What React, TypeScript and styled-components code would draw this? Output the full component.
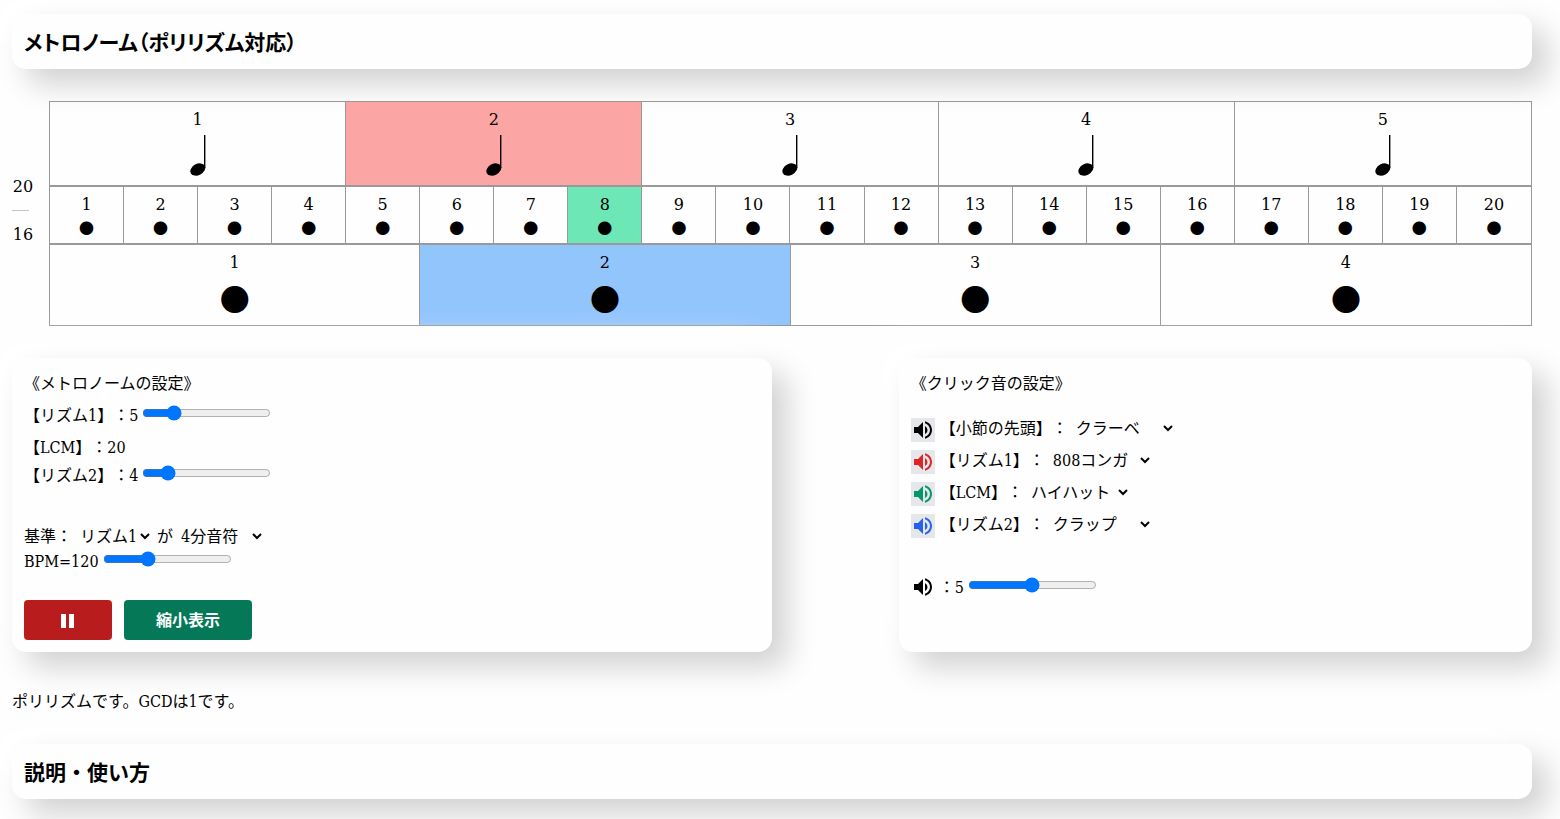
import React, { useState } from "react";
import styled, { createGlobalStyle } from "styled-components";
import { MdVolumeUp } from "react-icons/md";

const GlobalStyle = createGlobalStyle`
  *, *::before, *::after { box-sizing: border-box; }
  body {
    margin: 0;
    background: #fefefe;
    color: #000;
    font-family: "DejaVu Serif Condensed", "Noto Sans CJK JP", serif;
    font-size: 16px;
    font-weight: 400;
    line-height: 24px;
    text-spacing-trim: space-all;
  }
  button, input, select { font: inherit; color: inherit; }
`;

const Page = styled.main`
  padding: 14px 28px 20px 12px;
`;

const Card = styled.section`
  border-radius: 14px;
  background: #fefefe;
  box-shadow: 15px 15px 30px #d1d1d1, -15px -15px 30px #ffffff;
`;

const TitleCard = styled(Card)`
  padding: 13px 12px 14px;
`;

const Title = styled.h1<{ $tight?: boolean }>`
  margin: 0;
  font-family: "Noto Sans CJK JP", sans-serif;
  font-size: 21px;
  font-weight: 700;
  line-height: 28px;
  font-feature-settings: ${(p) => (p.$tight ? '"palt"' : "normal")};
`;

const Score = styled.section`
  display: flex;
  align-items: center;
  gap: 15px;
  margin: 32px 0;
`;

const Meter = styled.div`
  flex: none;
  width: 22px;
  padding-bottom: 6px;
  font-family: "DejaVu Serif", serif;
  text-align: center;
`;

const MeterLine = styled.hr`
  width: 17px;
  height: 1px;
  margin: 11px 0 12px;
  border: 0;
  background: #c4c4c4;
`;

const Tracks = styled.div`
  flex: 1;
  min-width: 0;
`;

const Track = styled.table`
  width: 100%;
  table-layout: fixed;
  border-collapse: separate;
  border-spacing: 0;
  border: 1px solid #999;
`;

const Beat = styled.td<{ $active?: string; $bottom: number }>`
  padding: 6px 0 ${(p) => p.$bottom}px;
  border-right: 1px solid #999;
  background: ${(p) => p.$active ?? "transparent"};
  text-align: center;
  &:last-child { border-right: 0; }
`;

const BeatNumber = styled.div`
  font-family: "DejaVu Serif", serif;
  line-height: 24px;
`;

const Dot = styled.div<{ $large?: boolean }>`
  font-family: "Noto Sans CJK JP", sans-serif;
  font-size: ${(p) => (p.$large ? 30 : 15)}px;
  line-height: ${(p) => (p.$large ? 46 : 22)}px;
`;

const NoteDrawing = styled.svg`
  display: block;
  margin: 3px auto 0;
`;

const Panels = styled.div`
  display: grid;
  grid-template-columns: 6fr 5fr;
  column-gap: calc(100% / 12);
`;

const Panel = styled(Card)`
  padding: 14px 12px 12px;
`;

const PanelTitle = styled.h2`
  margin: 0;
  font-size: 16px;
  font-weight: 400;
  line-height: 24px;
`;

const Row = styled.div<{ $top?: number }>`
  display: flex;
  align-items: center;
  height: 24px;
  margin-top: ${(p) => p.$top ?? 0}px;
  white-space: nowrap;
`;

const Slider = styled.input.attrs({ type: "range" })`
  width: 129px;
  height: 16px;
  margin: 0 0 6px 4px;
  accent-color: #0075ff;
`;

const Picker = styled.select<{ $width: number }>`
  width: ${(p) => p.$width}px;
  height: 24px;
  margin: 0 4px 2px;
  padding: 0;
  border: 0;
  background: transparent;
`;

const Buttons = styled.div`
  display: flex;
  gap: 12px;
  margin-top: 26px;
`;

const ActionButton = styled.button<{ $color: string; $width: number }>`
  display: flex;
  align-items: center;
  justify-content: center;
  width: ${(p) => p.$width}px;
  height: 40px;
  padding: 2px 0 0;
  border: 0;
  border-radius: 4px;
  background: ${(p) => p.$color};
  color: #fff;
  font-weight: 700;
`;

const SoundRow = styled.div<{ $top?: number }>`
  display: flex;
  align-items: flex-start;
  gap: 5px;
  margin-top: ${(p) => p.$top ?? 7}px;
`;

const IconButton = styled.button<{ $color: string }>`
  display: block;
  width: 24px;
  height: 24px;
  margin-top: 1px;
  padding: 0;
  border: 0;
  background: #e5e7eb;
  color: ${(p) => p.$color};
  svg { display: block; }
`;

const VolumeRow = styled(Row)`
  svg { flex: none; margin: 0 4px 2px 0; }
`;

const Message = styled.p`
  margin: 38px 0 30px;
`;

function QuarterNote() {
  return (
    <NoteDrawing width="16" height="42" viewBox="0 0 16 42" aria-hidden="true">
      <ellipse cx="7.8" cy="34.5" rx="7.9" ry="5.6" transform="rotate(-28 7.8 34.5)" />
      <path d="M14 0h1.4v33H14z" />
    </NoteDrawing>
  );
}

type TrackRowProps = {
  count: number;
  current: number;
  color: string;
  bottom: number;
  children: React.ReactNode;
};

function TrackRow({ count, current, color, bottom, children }: TrackRowProps) {
  return (
    <Track>
      <tbody>
        <tr>
          {Array.from({ length: count }, (_, i) => (
            <Beat key={i} $bottom={bottom} $active={i + 1 === current ? color : undefined}>
              <BeatNumber>{i + 1}</BeatNumber>
              {children}
            </Beat>
          ))}
        </tr>
      </tbody>
    </Track>
  );
}

const sounds = ["クラーベ", "808コンガ", "ハイハット", "クラップ"];

const clicks = [
  { id: "head", label: "【小節の先頭】：", color: "#000000", sound: "クラーベ" },
  { id: "rhythm1", label: "【リズム1】：", color: "#dc2626", sound: "808コンガ" },
  { id: "lcm", label: "【LCM】：", color: "#059669", sound: "ハイハット" },
  { id: "rhythm2", label: "【リズム2】：", color: "#2563eb", sound: "クラップ" },
];

export default function App() {
  const [rhythm1, setRhythm1] = useState(5);
  const [rhythm2, setRhythm2] = useState(4);
  const [bpm, setBpm] = useState(120);
  const [volume, setVolume] = useState(5);

  return (
    <>
      <GlobalStyle />
      <Page>
        <TitleCard>
          <Title $tight>メトロノーム（ポリリズム対応）</Title>
        </TitleCard>

        <Score>
          <Meter>
            20
            <MeterLine />
            16
          </Meter>
          <Tracks>
            <TrackRow count={5} current={2} color="#fca5a5" bottom={8}>
              <QuarterNote />
            </TrackRow>
            <TrackRow count={20} current={8} color="#6ee7b7" bottom={4}>
              <Dot>●</Dot>
            </TrackRow>
            <TrackRow count={4} current={2} color="#93c5fd" bottom={4}>
              <Dot $large>●</Dot>
            </TrackRow>
          </Tracks>
        </Score>

        <Panels>
          <Panel>
            <PanelTitle>《メトロノームの設定》</PanelTitle>
            <Row $top={8}>
              <label htmlFor="r1">【リズム1】：{rhythm1}</label>
              <Slider id="r1" min={1} max={20} value={rhythm1} onChange={(e) => setRhythm1(+e.target.value)} />
            </Row>
            <Row $top={8}>【LCM】：20</Row>
            <Row $top={4}>
              <label htmlFor="r2">【リズム2】：{rhythm2}</label>
              <Slider id="r2" min={1} max={20} value={rhythm2} onChange={(e) => setRhythm2(+e.target.value)} />
            </Row>
            <Row $top={37}>
              <label htmlFor="base">基準：</label>
              <Picker id="base" $width={77} defaultValue="リズム1">
                <option>リズム1</option>
                <option>リズム2</option>
              </Picker>
              <label htmlFor="unit">が</label>
              <Picker id="unit" $width={88} defaultValue="4分音符">
                <option>4分音符</option>
                <option>8分音符</option>
              </Picker>
            </Row>
            <Row $top={1}>
              <label htmlFor="bpm">BPM={bpm}</label>
              <Slider id="bpm" min={30} max={300} value={bpm} onChange={(e) => setBpm(+e.target.value)} />
            </Row>
            <Buttons>
              <ActionButton $color="#b91c1c" $width={88} aria-label="一時停止">
                <svg width="14" height="14" viewBox="0 0 14 14" fill="currentColor" aria-hidden="true">
                  <path d="M0 0h5v14H0zM8 0h5v14H8z" />
                </svg>
              </ActionButton>
              <ActionButton $color="#047857" $width={128}>縮小表示</ActionButton>
            </Buttons>
          </Panel>

          <Panel>
            <PanelTitle>《クリック音の設定》</PanelTitle>
            {clicks.map((c, i) => (
              <SoundRow key={c.id} $top={i === 0 ? 21 : 7}>
                <IconButton $color={c.color} aria-label={c.label}>
                  <MdVolumeUp size={24} />
                </IconButton>
                <Row>
                  <label htmlFor={c.id}>{c.label}</label>
                  <Picker id={c.id} $width={104} defaultValue={c.sound}>
                    {sounds.map((s) => (
                      <option key={s}>{s}</option>
                    ))}
                  </Picker>
                </Row>
              </SoundRow>
            ))}
            <VolumeRow $top={38}>
              <MdVolumeUp size={24} />
              <label htmlFor="volume">：{volume}</label>
              <Slider id="volume" min={0} max={10} value={volume} onChange={(e) => setVolume(+e.target.value)} />
            </VolumeRow>
          </Panel>
        </Panels>

        <Message>ポリリズムです。GCDは1です。</Message>

        <TitleCard>
          <Title as="h2">説明・使い方</Title>
        </TitleCard>
      </Page>
    </>
  );
}
